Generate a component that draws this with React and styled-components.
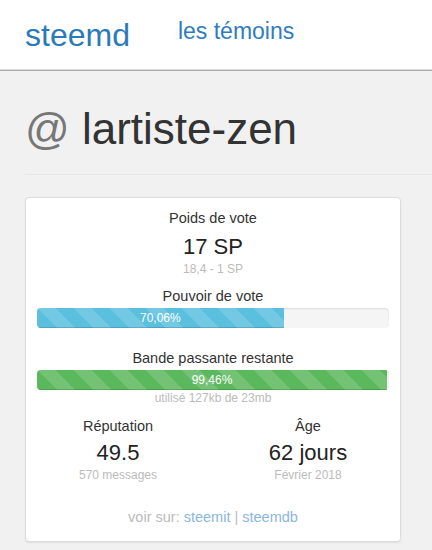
import React from "react";
import styled, { createGlobalStyle, css } from "styled-components";

const Global = createGlobalStyle`
  html, body { margin: 0; padding: 0; background: #f1f1f1; }
  body {
    font-family: "Liberation Sans", Arial, Helvetica, sans-serif;
    color: #333;
    min-height: 100vh;
  }
  * { box-sizing: border-box; }
`;

const NavBar = styled.header`
  height: 70px;
  background: #fff;
  border-bottom: 1px solid #ddd;
  box-shadow: 0 1px 0 #ababab;
  display: flex;
  align-items: flex-start;
  padding: 19px 0 0 25px;
`;

const Brand = styled.a`
  font-size: 32px;
  line-height: 32px;
  color: #2a7ab9;
  text-decoration: none;
  margin-right: 48px;
`;

const NavLink = styled.a`
  font-size: 23px;
  line-height: 23px;
  margin-top: 1px;
  color: #2f7dc0;
  text-decoration: none;
`;

const Main = styled.main`
  padding: 0 0 0 25px;
`;

const PageHeader = styled.div`
  margin-top: 37px;
  padding-bottom: 23px;
  border-bottom: 1px solid #e6e6e6;
`;

const Title = styled.h1`
  margin: 0;
  font-weight: normal;
  font-size: 44px;
  line-height: 44px;
  color: #333;
`;

const At = styled.span`
  color: #777;
`;

const Card = styled.section`
  margin-top: 22px;
  width: 376px;
  background: #fff;
  border: 1px solid #ddd;
  border-radius: 4px;
  box-shadow: 0 1px 2px rgba(0, 0, 0, 0.08);
  padding: 10px 11px 14px 11px;
  text-align: center;
`;

const Label = styled.div`
  font-size: 14.5px;
  line-height: 20px;
  color: #333;
  margin-top: ${(p) => p.$mt || 0}px;
`;

const Big = styled.div`
  font-size: 22px;
  line-height: 24px;
  color: #222;
  margin-top: ${(p) => p.$mt || 0}px;
`;

const Muted = styled.div`
  font-size: 12px;
  line-height: 16px;
  color: #bbb;
  margin-top: ${(p) => p.$mt || 0}px;
`;

const Progress = styled.div`
  height: 20px;
  margin-top: ${(p) => p.$mt || 0}px;
  background: #f5f5f5;
  border-radius: 4px;
  box-shadow: inset 0 1px 2px rgba(0, 0, 0, 0.1);
  overflow: hidden;
  display: flex;
`;

const stripes = css`
  background-image: linear-gradient(
    45deg,
    rgba(255, 255, 255, 0.15) 25%,
    transparent 25%,
    transparent 50%,
    rgba(255, 255, 255, 0.15) 50%,
    rgba(255, 255, 255, 0.15) 75%,
    transparent 75%,
    transparent
  );
  background-size: 36px 36px;
`;

const Fill = styled.div`
  height: 100%;
  background-color: ${(p) => p.$color};
  ${stripes};
  box-shadow: inset 0 -1px 0 rgba(0, 0, 0, 0.15);
  color: #fff;
  font-size: 12px;
  line-height: 20px;
  text-align: center;
`;

const Stats = styled.div`
  display: grid;
  grid-template-columns: 1fr 1fr;
  column-gap: 8px;
  margin: 10px -10px 0;
`;

const Stat = styled.div`
  display: flex;
  flex-direction: column;
  align-items: center;
`;

const Footer = styled.div`
  margin-top: 24px;
  font-size: 14.5px;
  line-height: 20px;
  color: #bbb;
`;

const FootLink = styled.a`
  color: #8cb6e0;
  text-decoration: none;
`;

export default function App() {
  return (
    <>
      <Global />
      <NavBar>
        <Brand href="#">steemd</Brand>
        <NavLink href="#">les témoins</NavLink>
      </NavBar>
      <Main>
        <PageHeader>
          <Title>
            <At>@</At> lartiste-zen
          </Title>
        </PageHeader>
        <Card>
          <Label>Poids de vote</Label>
          <Big $mt={7}>17 SP</Big>
          <Muted $mt={2}>18,4 - 1 SP</Muted>
          <Label $mt={9}>Pouvoir de vote</Label>
          <Progress $mt={2}>
            <Fill $color="#5bc0de" style={{ width: "70.06%" }}>
              70,06%
            </Fill>
          </Progress>
          <Label $mt={20}>Bande passante restante</Label>
          <Progress $mt={2}>
            <Fill $color="#5cb85c" style={{ width: "99.46%" }}>
              99,46%
            </Fill>
          </Progress>
          <Muted>utilisé 127kb de 23mb</Muted>
          <Stats>
            <Stat>
              <Label>Réputation</Label>
              <Big $mt={5}>49.5</Big>
              <Muted $mt={2}>570 messages</Muted>
            </Stat>
            <Stat>
              <Label>Âge</Label>
              <Big $mt={5}>62 jours</Big>
              <Muted $mt={2}>Février 2018</Muted>
            </Stat>
          </Stats>
          <Footer>
            voir sur: <FootLink href="#">steemit</FootLink> |{" "}
            <FootLink href="#">steemdb</FootLink>
          </Footer>
        </Card>
      </Main>
    </>
  );
}
